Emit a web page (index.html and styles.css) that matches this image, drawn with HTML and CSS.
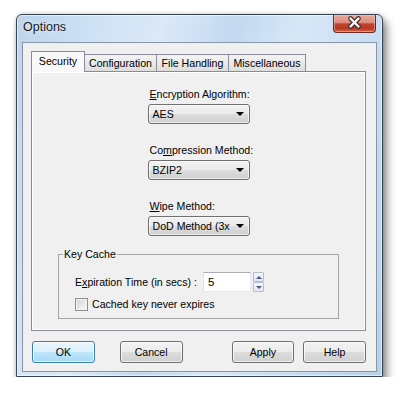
FILE: index.html
```html
<!DOCTYPE html>
<html lang="en">
<head>
    <meta charset="UTF-8">
    <title>Options</title>
    <link rel="stylesheet" href="styles.css">
</head>
<body>
    <div class="window">
        <div class="titlebar">
            <span class="title">Options</span>
            <div class="close-btn">
                <svg width="43" height="18" viewBox="0 0 43 18">
                    <path d="M17.5 4.5 L25.5 12.5 M25.5 4.5 L17.5 12.5" stroke="#3a3030" stroke-width="4.6" stroke-linecap="round" fill="none"/>
                    <path d="M17.5 4.5 L25.5 12.5 M25.5 4.5 L17.5 12.5" stroke="#ffffff" stroke-width="2.4" stroke-linecap="round" fill="none"/>
                </svg>
            </div>
        </div>

        <div class="client">
            <div class="tabs">
                <div class="tab active">Security</div>
                <div class="tab tab-config">Configuration</div>
                <div class="tab tab-files">File Handling</div>
                <div class="tab tab-misc">Miscellaneous</div>
            </div>

            <div class="panel">
                <div class="field">
                    <label><u>E</u>ncryption Algorithm:</label>
                    <div class="combo"><span>AES</span><i class="arrow"></i></div>
                </div>
                <div class="field">
                    <label>Co<u>m</u>pression Method:</label>
                    <div class="combo"><span>BZIP2</span><i class="arrow"></i></div>
                </div>
                <div class="field">
                    <label><u>W</u>ipe Method:</label>
                    <div class="combo"><span>DoD Method (3x</span><i class="arrow"></i></div>
                </div>

                <fieldset class="group">
                    <legend>Key Cache</legend>
                    <div class="row">
                        <label class="exp-label">E<u>x</u>piration Time (in secs) :</label>
                        <div class="num-input">5</div>
                        <div class="spin">
                            <div class="spin-btn"><i class="up"></i></div>
                            <div class="spin-btn"><i class="down"></i></div>
                        </div>
                    </div>
                    <div class="row check-row">
                        <span class="checkbox"></span>
                        <span>Cached key never expires</span>
                    </div>
                </fieldset>
            </div>

            <div class="buttons">
                <div class="btn btn-default btn-ok">OK</div>
                <div class="btn btn-cancel">Cancel</div>
                <div class="btn btn-apply">Apply</div>
                <div class="btn btn-help">Help</div>
            </div>
        </div>
    </div>
</body>
</html>
```

FILE: styles.css
```css
* {
    box-sizing: border-box;
}

body {
    margin: 0;
    background-color: #ffffff;
    font-family: "Liberation Sans", Arial, sans-serif;
    font-size: 10.6px;
    color: #000000;
    white-space: nowrap;
}

.window {
    margin: 14px 0 0 16px;
    width: 367px;
    height: 363px;
    border: 1px solid #39434f;
    border-radius: 6px 6px 0 0;
    background: linear-gradient(105deg, #bcd4ec 0%, #cfe2f5 18%, #dbe9f8 32%, #c3d9f0 48%, #d7e7f7 62%, #c6dcf2 82%, #b7d1eb 100%);
    box-shadow: inset 0 0 0 1px rgba(255, 255, 255, 0.55), 4px 6px 9px rgba(0, 0, 0, 0.45), 0 0 4px rgba(0, 0, 0, 0.2);
    display: flex;
    flex-direction: column;
}

.titlebar {
    height: 27px;
    display: flex;
    justify-content: space-between;
    align-items: flex-start;
}

.title {
    padding: 5px 0 0 6px;
    font-size: 12.5px;
    line-height: 15px;
    color: #1a1a1a;
    text-shadow: 0 0 5px rgba(255, 255, 255, 0.9);
}

.close-btn {
    width: 43px;
    height: 18px;
    margin-right: 6px;
    border: 1px solid #6a2b22;
    border-top: none;
    border-radius: 0 0 4px 4px;
    background: linear-gradient(#e8a99d 0%, #dc8b7c 45%, #c4452f 52%, #b8381f 78%, #d2674b 100%);
    box-shadow: inset 0 0 0 1px rgba(255, 210, 200, 0.45);
}

.close-btn svg {
    display: block;
    margin: -1px 0 0 -1px;
}

.client {
    margin: 0 5px;
    height: 330px;
    border: 1px solid #8796a6;
    background-color: #f0f0f0;
    padding: 8px 10px 0 8px;
}

/* tab strip */

.tabs {
    display: flex;
    align-items: flex-end;
    height: 20px;
}

.tab {
    height: 17px;
    border: 1px solid #898c95;
    border-bottom: none;
    background: linear-gradient(#f4f4f4 0%, #e9e9e9 50%, #dedede 100%);
    text-align: center;
    line-height: 16px;
    margin-left: -1px;
}

.tab.active {
    position: relative;
    z-index: 1;
    height: 21px;
    margin-bottom: -1px;
    margin-left: 0;
    width: 54px;
    background: #f9f9f9;
    line-height: 18px;
}

.tab-config {
    width: 73px;
}

.tab-files {
    width: 73px;
}

.tab-misc {
    width: 78px;
}

.panel {
    width: 335px;
    height: 260px;
    border: 1px solid #898c95;
    background-color: #f0f0f0;
    box-shadow: inset 1px 1px 0 #ffffff, inset -1px -1px 0 #ffffff;
    padding-top: 16px;
    display: flex;
    flex-direction: column;
    align-items: center;
}

.field {
    width: 102px;
    display: flex;
    flex-direction: column;
}

.field + .field {
    margin-top: 20px;
}

.field label {
    line-height: 13px;
    padding-left: 2px;
    margin-bottom: 3px;
}

.combo {
    height: 20px;
    border: 1px solid #707070;
    border-radius: 3px;
    background: linear-gradient(#f2f2f2 0%, #ebebeb 50%, #dddddd 51%, #cfcfcf 100%);
    box-shadow: inset 0 0 0 1px rgba(255, 255, 255, 0.6);
    display: flex;
    align-items: center;
    justify-content: space-between;
    padding: 0 5px 0 4px;
    overflow: hidden;
}

.arrow {
    flex: none;
    width: 0;
    height: 0;
    border-top: 4px solid #000000;
    border-left: 4px solid transparent;
    border-right: 4px solid transparent;
}

/* key cache group */

.group {
    width: 281px;
    margin: 12px 0 0 0;
    border: 1px solid #a4a4a4;
    padding: 11px 16px 6px 16px;
}

.group legend {
    margin-left: -12px;
    padding: 0 1px;
    line-height: 13px;
}

.row {
    display: flex;
    align-items: center;
    height: 20px;
}

.exp-label {
    width: 128px;
}

.num-input {
    width: 48px;
    height: 20px;
    background-color: #ffffff;
    border: 1px solid #e3e9ef;
    border-top-color: #abadb3;
    border-left-color: #e2e3ea;
    padding: 3px 0 0 4px;
    font-size: 11.5px;
}

.spin {
    margin-left: 2px;
    width: 11px;
    height: 20px;
    display: flex;
    flex-direction: column;
}

.spin-btn {
    height: 10px;
    border: 1px solid #b5c0cc;
    border-radius: 1px;
    background: linear-gradient(#f6f8fa, #dfe5ec);
    display: flex;
    align-items: center;
    justify-content: center;
}

.spin .up {
    border-bottom: 3px solid #4b5e82;
    border-left: 3px solid transparent;
    border-right: 3px solid transparent;
}

.spin .down {
    border-top: 3px solid #4b5e82;
    border-left: 3px solid transparent;
    border-right: 3px solid transparent;
}

.check-row {
    margin-top: 4px;
    height: 16px;
}

.checkbox {
    width: 13px;
    height: 13px;
    border: 1px solid #8f8f8f;
    background: linear-gradient(135deg, #d2d2d2 0%, #e9e9e9 55%, #fbfbfb 100%);
    box-shadow: inset 0 0 0 1px #f4f4f4;
    margin-right: 4px;
}

/* bottom buttons */

.buttons {
    display: flex;
    margin-top: 10px;
}

.btn {
    width: 63px;
    height: 22px;
    border: 1px solid #707070;
    border-radius: 3px;
    background: linear-gradient(#f2f2f2 0%, #ebebeb 50%, #dddddd 51%, #cfcfcf 100%);
    box-shadow: inset 0 0 0 1px rgba(255, 255, 255, 0.7);
    text-align: center;
    line-height: 20px;
}

.btn-default {
    border-color: #3c7fb1;
    background: linear-gradient(#eaf6fd 0%, #d9f0fc 50%, #bee6fd 51%, #a7d9f5 100%);
}

.btn-ok {
    margin-left: 1px;
}

.btn-cancel {
    margin-left: 25px;
}

.btn-apply {
    margin-left: 49px;
}

.btn-help {
    margin-left: 9px;
}
```
